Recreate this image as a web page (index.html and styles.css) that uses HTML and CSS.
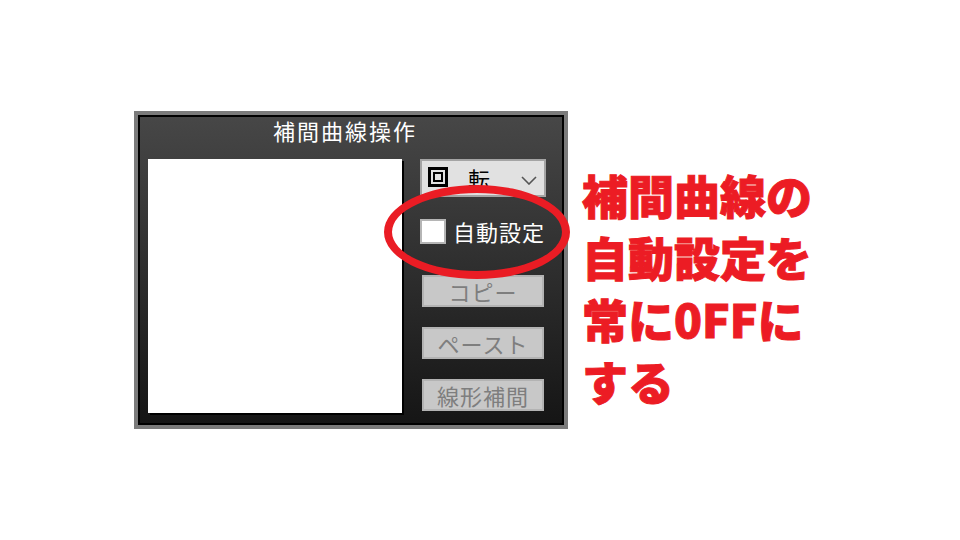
FILE: index.html
```html
<!DOCTYPE html>
<html lang="ja">
<head>
  <meta charset="UTF-8" />
  <title>補間曲線操作</title>
  <link rel="stylesheet" href="styles.css">
</head>
<body>

  <div class="stage">
    <div class="window">
      <div class="title">補間曲線操作</div>

      <div class="content">
        <div class="curve-box"></div>

        <div class="side">
          <div class="dropdown">
            <svg class="kai-icon" viewBox="0 0 20 20" width="20" height="20">
              <rect x="1.5" y="1.5" width="17" height="17" fill="none" stroke="#000" stroke-width="3"/>
              <rect x="6" y="6" width="8" height="8" fill="none" stroke="#000" stroke-width="2"/>
            </svg>
            <span class="dropdown-text">転</span>
            <svg class="chevron" viewBox="0 0 16 9" width="16" height="9">
              <polyline points="1,1 8,8 15,1" fill="none" stroke="#555" stroke-width="1.6"/>
            </svg>
          </div>

          <label class="check-row">
            <span class="check-box"></span>
            <span class="check-label">自動設定</span>
          </label>

          <button class="btn" disabled>コピー</button>
          <button class="btn" disabled>ペースト</button>
          <button class="btn" disabled>線形補間</button>
        </div>
      </div>

      <!-- 赤丸の強調 -->
      <div class="circle-mark"></div>
    </div>

    <div class="note">
      補間曲線の<br>
      自動設定を<br>
      常に0FFに<br>
      する
    </div>
  </div>

</body>
</html>
```

FILE: styles.css
```css
html, body {
  margin: 0;
  padding: 0;
}

body {
  background-color: #fff;
  font-family: "Noto Sans CJK JP", "Noto Sans", sans-serif;
}

.stage {
  display: flex;
  align-items: flex-start;
  gap: 14px;
  padding: 111px 0 0 134px;
}

.window {
  position: relative;
  width: 434px;
  height: 318px;
  box-sizing: border-box;
  border: 4px solid #7b7b7b;
  background: linear-gradient(#474747, #151515);
  box-shadow: inset 0 0 0 2px #000;
  padding: 0 0 0 10px;
}

.title {
  height: 30px;
  line-height: 30px;
  margin-bottom: 14px;
  padding-right: 22px;
  text-align: center;
  color: #fff;
  font-size: 22px;
  letter-spacing: 2px;
}

.content {
  display: flex;
  align-items: flex-start;
  gap: 18px;
}

.curve-box {
  width: 254px;
  height: 254px;
  background-color: #fff;
  box-shadow: 2px 2px 0 #000;
}

.side {
  display: flex;
  flex-direction: column;
  align-items: flex-start;
}

.dropdown {
  display: flex;
  align-items: center;
  width: 126px;
  height: 38px;
  box-sizing: border-box;
  border: 2px solid #a4a4a4;
  background-color: #e1e1e1;
  padding: 0 7px 0 6px;
}

.kai-icon {
  display: block;
  margin-top: -2px;
}

.dropdown-text {
  margin-left: 20px;
  font-size: 22px;
  color: #000;
  line-height: 1;
}

.chevron {
  margin-left: auto;
  margin-top: 4px;
}

.check-row {
  display: flex;
  align-items: center;
  gap: 7px;
  margin-top: 22px;
  height: 25px;
}

.check-box {
  width: 26px;
  height: 25px;
  box-sizing: border-box;
  border: 2px solid #b5b5b5;
  background-color: #fff;
}

.check-label {
  color: #fff;
  font-size: 22px;
  letter-spacing: 1px;
  line-height: 25px;
}

.btn {
  width: 122px;
  height: 32px;
  margin: 20px 0 0 2px;
  padding: 0;
  box-sizing: border-box;
  border: 2px solid #b3b3b3;
  background-color: #c8c8c8;
  color: #7e7e7e;
  font-family: inherit;
  font-size: 22px;
  line-height: 1;
  letter-spacing: 1px;
}

.check-row + .btn {
  margin-top: 31px;
}

/* 赤い楕円 */
.circle-mark {
  position: absolute;
  left: 246px;
  top: 70px;
  width: 186px;
  height: 94px;
  box-sizing: border-box;
  border: 8px solid #ea1c24;
  border-radius: 50%;
}

.note {
  margin-top: 52px;
  color: #ec1c24;
  font-size: 46px;
  font-weight: 900;
  line-height: 62px;
  -webkit-text-stroke: 1px #ec1c24;
}
```
